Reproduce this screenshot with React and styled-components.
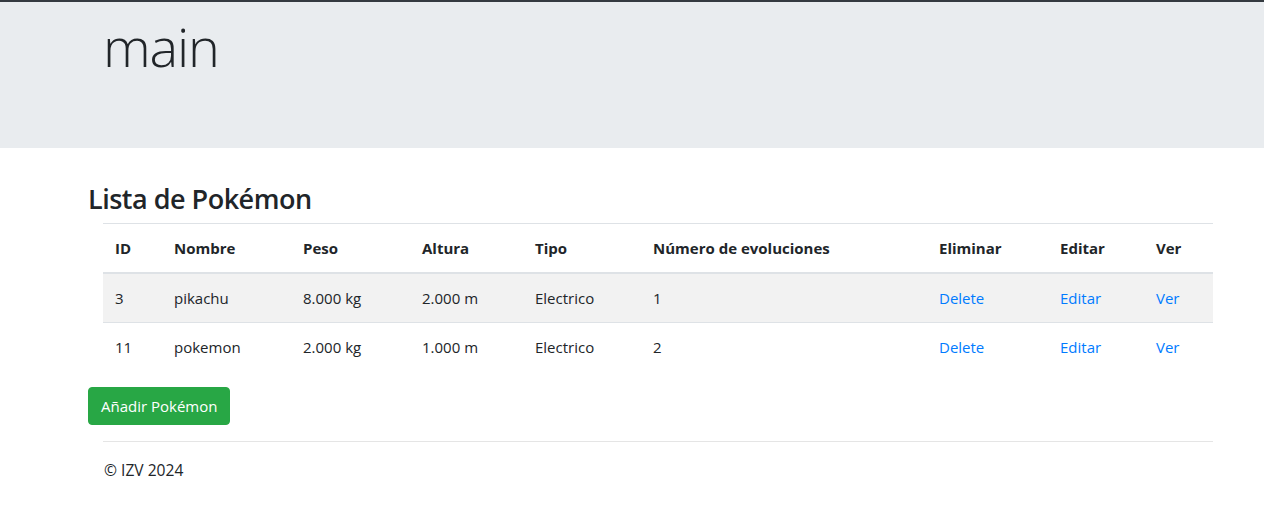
import React from "react";
import styled, { createGlobalStyle } from "styled-components";

const FONT = `"Open Sans", "Noto Sans", "Liberation Sans", sans-serif`;

const Global = createGlobalStyle`
  html, body { margin: 0; padding: 0; background: #fff; }
  body {
    font-family: ${FONT};
    font-size: 16px;
    line-height: 1.5;
    color: #212529;
  }
  * { box-sizing: border-box; }
`;

const TopBar = styled.div`
  height: 2px;
  background: #343a40;
`;

const Jumbotron = styled.header`
  background: #e9ecef;
  height: 146px;
  margin-bottom: 33px;
  padding-left: 103px;
  padding-top: 11px;
`;

const Display = styled.h1`
  margin: 0;
  font-size: 54px;
  font-weight: 300;
  line-height: 67px;
  letter-spacing: -1.2px;
  color: #212529;
`;

const Container = styled.main`
  width: 1140px;
  margin-left: 88px;
`;

const Title = styled.h3`
  margin: 0 0 8px;
  font-size: 27px;
  font-weight: 600;
  line-height: 34px;
  height: 34px;
  letter-spacing: -0.5px;
  padding-top: 1px;
`;

const TableWrap = styled.div`
  padding: 0 15px;
`;

const Table = styled.table`
  width: 1110px;
  border-collapse: collapse;
  table-layout: fixed;
  margin-bottom: 16px;
`;

const Th = styled.th`
  text-align: left;
  font-weight: 700;
  font-size: 15px;
  padding: 12px;
  line-height: 24px;
  border-top: 1px solid #dee2e6;
  border-bottom: 2px solid #dee2e6;
  white-space: nowrap;
`;

const Tr = styled.tr`
  background: ${(p) => (p.$striped ? "#f2f2f2" : "transparent")};
`;

const Td = styled.td`
  padding: 12px;
  font-size: 15px;
  line-height: 24px;
  border-top: 1px solid #dee2e6;
  white-space: nowrap;
`;

const Link = styled.a`
  color: #007bff;
  text-decoration: none;
  cursor: pointer;
`;

const Button = styled.button`
  display: inline-block;
  font-family: ${FONT};
  font-size: 15px;
  line-height: 24px;
  padding: 6px 12px;
  border: 1px solid #28a745;
  border-radius: 4px;
  background: #28a745;
  color: #fff;
  cursor: pointer;
`;

const Footer = styled.footer`
  padding: 0 15px;
  margin-top: 16px;
`;

const Rule = styled.hr`
  margin: 0 0 16px;
  border: 0;
  border-top: 1px solid rgba(0, 0, 0, 0.1);
`;

const FootText = styled.p`
  margin: 0;
  font-size: 15.6px;
  padding-left: 1px;
  padding-top: 1px;
`;

const cols = [59, 129, 119, 113, 118, 286, 121, 96, 69];
const heads = ["ID", "Nombre", "Peso", "Altura", "Tipo", "Número de evoluciones", "Eliminar", "Editar", "Ver"];
const rows = [
  { id: 3, nombre: "pikachu", peso: "8.000 kg", altura: "2.000 m", tipo: "Electrico", evo: 1 },
  { id: 11, nombre: "pokemon", peso: "2.000 kg", altura: "1.000 m", tipo: "Electrico", evo: 2 },
];

export default function App() {
  return (
    <>
      <Global />
      <TopBar />
      <Jumbotron>
        <Display>main</Display>
      </Jumbotron>
      <Container>
        <Title>Lista de Pokémon</Title>
        <TableWrap>
          <Table>
            <colgroup>
              {cols.map((w, i) => (
                <col key={i} style={{ width: w }} />
              ))}
            </colgroup>
            <thead>
              <tr>
                {heads.map((h) => (
                  <Th key={h}>{h}</Th>
                ))}
              </tr>
            </thead>
            <tbody>
              {rows.map((r, i) => (
                <Tr key={r.id} $striped={i % 2 === 0}>
                  <Td>{r.id}</Td>
                  <Td>{r.nombre}</Td>
                  <Td>{r.peso}</Td>
                  <Td>{r.altura}</Td>
                  <Td>{r.tipo}</Td>
                  <Td>{r.evo}</Td>
                  <Td><Link>Delete</Link></Td>
                  <Td><Link>Editar</Link></Td>
                  <Td><Link>Ver</Link></Td>
                </Tr>
              ))}
            </tbody>
          </Table>
        </TableWrap>
        <Button>Añadir Pokémon</Button>
        <Footer>
          <Rule />
          <FootText>© IZV 2024</FootText>
        </Footer>
      </Container>
    </>
  );
}
